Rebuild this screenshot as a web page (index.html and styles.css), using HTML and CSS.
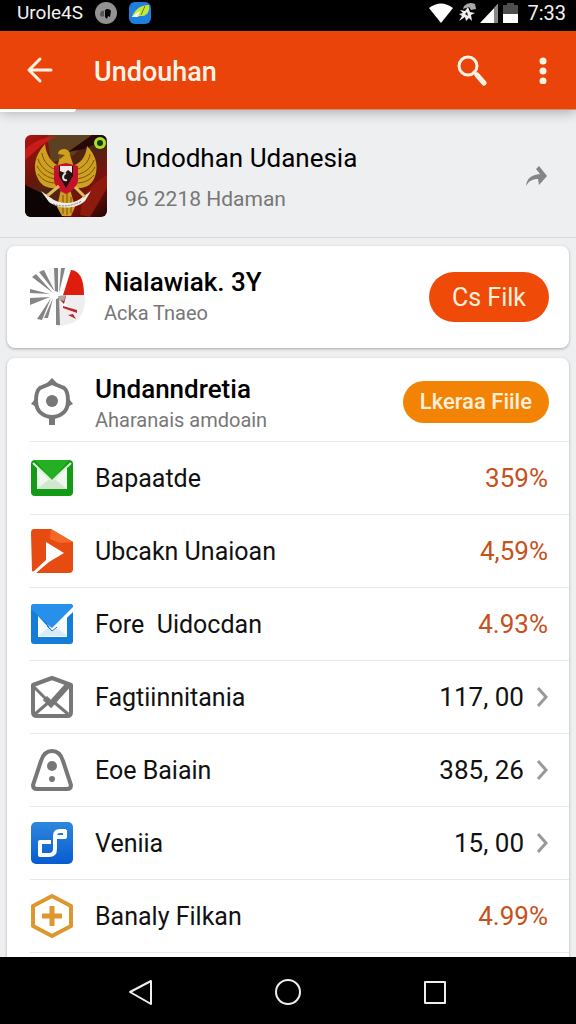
FILE: index.html
```html
<!DOCTYPE html>
<html lang="id">
<head>
    <meta charset="UTF-8">
    <meta name="viewport" content="width=device-width, initial-scale=1.0">
    <title>Undouhan</title>
    <link rel="stylesheet" href="styles.css">
</head>
<body>
    <div class="status-bar">
        <span>Urole4S</span>
        <svg width="22" height="22" viewBox="0 0 22 22">
            <circle cx="11" cy="11" r="11" fill="#929292"/>
            <path d="M5 13c0-3 2-5 4-4v5c-2 1-3 1-4-1z" fill="#555"/>
            <path d="M10 8c2-2 5-1 6 1l-1 6-2-1-1 3-2-2z" fill="#050505"/>
        </svg>
        <svg width="22" height="22" viewBox="0 0 22 22">
            <rect width="22" height="22" rx="6" fill="#1e7fe0"/>
            <path d="M3 15C6 7 12 3 20 3c1 5-1 10-6 11-4 0-7 0-11 1z" fill="#c9e636"/>
            <path d="M3 15c3-3 5-5 8-6l-2 6z" fill="#e9f6f5"/>
            <path d="M12 13l4-9" stroke="#508c2a" stroke-width="1"/>
        </svg>
        <span class="spacer"></span>
        <svg class="wifi" width="26" height="22" viewBox="0 0 26 22">
            <path d="M1 6Q13-3 25 6L13 21z" fill="#fff"/>
        </svg>
        <svg width="18" height="22" viewBox="0 0 18 22">
            <path d="M6 4Q11-1 17 2l1 5-5 1-2-3-6 2z" fill="#aaa"/>
            <path d="M2 8l5 1 3-4 2 5 5 1-4 2 1 6-3-3-3 3-1-4-6 4 3-5-3-2 4-1z" fill="#eee"/>
            <path d="M7 12l2-2 1 4z" fill="#111"/>
        </svg>
        <svg width="19" height="22" viewBox="0 0 19 22">
            <path d="M0 21L18 2v19z" fill="#fff"/>
            <path d="M14 6l4-4v19h-4z" fill="#888"/>
        </svg>
        <svg width="15" height="22" viewBox="0 0 15 22">
            <path d="M0 3h4V1h7v2h4v18H0z" fill="#4d4d4d"/>
            <path d="M0 12h15v9H0z" fill="#fff"/>
        </svg>
        <span class="clock">7:33</span>
    </div>

    <header class="app-bar">
        <button class="icon-btn" type="button" aria-label="Kembali">
            <svg width="28" height="28" viewBox="0 0 28 28" fill="none" stroke="#fff3e6" stroke-width="3" stroke-linecap="round" stroke-linejoin="round">
                <path d="M14 3L3 14l11 11M3 14h22"/>
            </svg>
        </button>
        <h1>Undouhan</h1>
        <button class="icon-btn" type="button" aria-label="Cari">
            <svg width="32" height="32" viewBox="0 0 32 32" fill="none" stroke="#fff3e6" stroke-linecap="round">
                <circle cx="12" cy="12" r="9" stroke-width="3"/>
                <path d="M18 18l3 3" stroke-width="3"/>
                <path d="M21 21l7 8" stroke-width="5"/>
            </svg>
        </button>
        <button class="icon-btn menu-btn" type="button" aria-label="Menu">
            <svg width="10" height="28" viewBox="0 0 10 28" fill="#fff3e6">
                <circle cx="5" cy="5" r="3.5"/>
                <circle cx="5" cy="15" r="3.5"/>
                <circle cx="5" cy="25" r="3.5"/>
            </svg>
        </button>
    </header>

    <main>
        <section class="profile">
            <svg class="emblem" width="82" height="82" viewBox="0 0 82 82">
                <defs>
                    <linearGradient id="cloth" x1="0" y1="0" x2="1" y2="1">
                        <stop offset="0" stop-color="#b31210"/>
                        <stop offset=".3" stop-color="#6b1509"/>
                        <stop offset=".5" stop-color="#4a2715"/>
                        <stop offset=".75" stop-color="#7d0f0a"/>
                        <stop offset="1" stop-color="#200503"/>
                    </linearGradient>
                </defs>
                <rect width="82" height="82" fill="url(#cloth)"/>
                <path d="M0 50l25 12 14 20H0z" fill="#0d0504"/>
                <path d="M22 0h45L49 20 26 28z" fill="#5b4022"/>
                <path d="M67 0L43 17l16-3L82 4V0z" fill="#260807"/>
                <path d="M0 14Q14 2 31 1L17 10 0 25z" fill="#c91c18"/>
                <path d="M55 80Q57 53 82 40v13L65 82z" fill="#8e1a0d"/>
                <g fill="#cf9f1f">
                    <path d="M20 9C10 20 7 32 13 44c4 8 12 10 20 9l2-22C27 29 21 20 20 9z"/>
                    <path d="M62 11c10 10 12 22 7 33-4 8-12 10-20 9l-2-22c8-2 14-9 15-20z"/>
                    <path d="M32 32l3-10-2-4c2-6 12-5 12 2l4 12z"/>
                    <path d="M36 54l-4 18 5 9h9l4-9-5-18z"/>
                </g>
                <g fill="none" stroke="#765510" stroke-width="1">
                    <path d="M17 18c1 8 7 15 15 17M13 24c3 9 10 14 18 16M12 31c4 8 11 12 19 13M13 39c5 7 11 9 18 9"/>
                    <path d="M65 19c-1 8-7 14-15 16M69 25c-3 9-10 13-18 15M70 32c-4 8-11 11-19 12M69 40c-5 6-11 8-18 8"/>
                    <path d="M38 60v19M42 58v22M46 62v16"/>
                </g>
                <path d="M33 19l7 1-5 4z" fill="#6e4c15"/>
                <path d="M29 31l12-3 12 3v15q-2 9-12 13-10-4-12-13z" fill="#c3132a"/>
                <path d="M34 31h14v10l-7 12-7-12z" fill="#23100f"/>
                <path d="M35 31h12v7l-4-3-3 3-5-2z" fill="#f4e6e3"/>
                <path d="M41 38c-5 3-3 8 1 7" fill="none" stroke="#ddd" stroke-width="2"/>
                <path d="M16 56l13 9c8 4 19 4 26-1l11-8-6 10c-10 9-27 8-36 1z" fill="#f0ece6"/>
                <path d="M28 69q14 5 29-3" fill="none" stroke="#777" stroke-width="1" stroke-dasharray="2 1"/>
                <path d="M22 61l12-10M60 62L50 52" stroke="#dfba5b" stroke-width="3"/>
                <circle cx="75" cy="8" r="6" fill="#a8df2c"/>
                <circle cx="75" cy="8" r="3" fill="#173c0c"/>
            </svg>
            <div class="texts">
                <h2>Undodhan Udanesia</h2>
                <p>96 2218 Hdaman</p>
            </div>
            <button class="icon-btn" type="button" aria-label="Bagikan">
                <svg width="24" height="22" viewBox="0 0 24 22">
                    <path d="M2 21C3 13 7 10 16 9l-4-5 3-3 8 10-8 9-1-6C8 14 5 16 2 21z" fill="#858585"/>
                </svg>
            </button>
        </section>

        <section class="card promo">
            <svg width="56" height="60" viewBox="0 0 56 60">
                <path d="M18 1h18l-6 26-9-6z" fill="#f7f7f7"/>
                <path d="M41 3q13 1 13 25H33z" fill="#df1d0e"/>
                <path d="M33 28h22q1 25-16 29l-12 3 1-28z" fill="#eee"/>
                <g fill="#858585">
                    <path d="M24 1h4v24l-3-1zM31 1h4l-6 25zM2 10l4-3 17 19zM9 5l5-2 11 22zM0 22l20 5-20-1zM0 31l20-1-20 8zM7 52l14-21-9 22zM14 51l9-20-5 20zM26 32l3-1 1 27h-4z"/>
                </g>
                <path d="M38 18l-8 14 3 9 14 5-15-12 1-7z" fill="#fff"/>
                <path d="M28 31l8-2-2 8zM33 39l14 4v3l-14-5zM38 48l5-1 3 5z" fill="#bd252e"/>
                <path d="M28 29l8-1-2 6-5-1z" fill="#aaa"/>
            </svg>
            <div class="texts">
                <h2>Nialawiak. 3Y</h2>
                <p>Acka Tnaeo</p>
            </div>
            <button class="pill" type="button">Cs Filk</button>
        </section>

        <section class="card files">
            <div class="card-head">
                <svg width="42" height="48" viewBox="0 0 42 48">
                    <g fill="none" stroke="#777">
                        <path d="M21 5l12 5q4 3 4 13 0 8-5 12-5 4-11 4t-11-4q-5-4-5-12 0-10 4-13z" stroke-width="4"/>
                        <path d="M21 39v8" stroke-width="6"/>
                    </g>
                    <path d="M16 5l5-5 5 5zM4 21v7l-4-2zM38 21v7l4-2z" fill="#777"/>
                    <circle cx="21" cy="23" r="6" fill="#777"/>
                </svg>
                <div class="texts">
                    <h2>Undanndretia</h2>
                    <p>Aharanais amdoain</p>
                </div>
                <button class="pill pill-amber" type="button">Lkeraa Fiile</button>
            </div>
            <ul class="list">
                <li class="row">
                    <svg width="42" height="42" viewBox="0 0 42 42">
                        <rect y="3" width="42" height="36" rx="4" fill="#149b16"/>
                        <path d="M6 10l15 14 15-14v22H6z" fill="#eef8ed"/>
                        <path d="M6 32l15-12 15 12z" fill="#d1e7d0"/>
                        <path d="M2 6l19 18L40 6" fill="none" stroke="#d9f1d5" stroke-width="2"/>
                        <path d="M4 3h34L21 23z" fill="#25af22"/>
                    </svg>
                    <span class="name">Bapaatde</span>
                    <span class="percent">359%</span>
                </li>
                <li class="row">
                    <svg width="42" height="44" viewBox="0 0 42 44">
                        <path d="M3 0h17l22 13v27q0 4-4 4H6L1 42 0 4q0-4 3-4z" fill="#e64b11"/>
                        <path d="M20 0l22 13-13 1-10-4z" fill="#f66827"/>
                        <path d="M15 13l18 11-15 9L5 44H1l14-13z" fill="#fff"/>
                    </svg>
                    <span class="name">Ubcakn Unaioan</span>
                    <span class="percent">4,59%</span>
                </li>
                <li class="row">
                    <svg width="42" height="40" viewBox="0 0 42 40">
                        <rect width="42" height="40" rx="3" fill="#147dd7"/>
                        <path d="M3 0h36q3 0 3 3L21 24 0 5q0-5 3-5z" fill="#2690ea"/>
                        <path d="M7 12l13 14 16-13v20H7z" fill="#f5faff"/>
                        <path d="M7 32l11-9 4 4 4-3 10 8z" fill="#d9eaf8"/>
                        <path d="M16 20l5 4L42 3v5L22 27z" fill="#fff"/>
                        <path d="M16 22l5 5 5-4" fill="none" stroke="#287bbc" stroke-width="1"/>
                    </svg>
                    <span class="name">Fore&nbsp; Uidocdan</span>
                    <span class="percent">4.93%</span>
                </li>
                <li>
                    <a class="row" href="#">
                        <svg width="42" height="42" viewBox="0 0 42 42" fill="none" stroke="#777">
                            <path d="M2 9l19-7 19 7v27q0 4-4 4H6q-4 0-4-4z" stroke-width="4" stroke-linejoin="round"/>
                            <path d="M3 11l16 16M4 38l14-12M24 27l13 11" stroke-width="3"/>
                            <path d="M14 22l6 6L38 8" stroke-width="6"/>
                        </svg>
                        <span class="name">Fagtiinnitania</span>
                        <span class="amount">117, 00</span>
                        <svg class="chevron" width="12" height="22" viewBox="0 0 12 22"><path d="M2 2l8 9-8 9"/></svg>
                    </a>
                </li>
                <li>
                    <a class="row" href="#">
                        <svg width="42" height="42" viewBox="0 0 42 42">
                            <path d="M10 12C12 5 16 2 21 2s9 3 11 10l8 24q0 4-4 4H6q-4 0-4-4z" fill="none" stroke="#777" stroke-width="4"/>
                            <circle cx="21" cy="17" r="5" fill="#777"/>
                            <circle cx="21" cy="30" r="3" fill="#777"/>
                        </svg>
                        <span class="name">Eoe Baiain</span>
                        <span class="amount">385, 26</span>
                        <svg class="chevron" width="12" height="22" viewBox="0 0 12 22"><path d="M2 2l8 9-8 9"/></svg>
                    </a>
                </li>
                <li>
                    <a class="row" href="#">
                        <svg width="42" height="42" viewBox="0 0 42 42">
                            <defs>
                                <linearGradient id="blue" x1="0" y1="0" x2="0" y2="1">
                                    <stop offset="0" stop-color="#2d87dd"/>
                                    <stop offset="1" stop-color="#075cd0"/>
                                </linearGradient>
                            </defs>
                            <rect width="42" height="42" rx="5" fill="url(#blue)"/>
                            <path d="M20 20H9v13h9q6 0 6-6V14q0-5 5-5h6M25 15h9V8" fill="none" stroke="#fff" stroke-width="4" stroke-linejoin="round"/>
                        </svg>
                        <span class="name">Veniia</span>
                        <span class="amount">15, 00</span>
                        <svg class="chevron" width="12" height="22" viewBox="0 0 12 22"><path d="M2 2l8 9-8 9"/></svg>
                    </a>
                </li>
                <li class="row">
                    <svg width="42" height="44" viewBox="0 0 42 44" fill="none" stroke="#dd972d" stroke-linejoin="round">
                        <path d="M21 2l19 10v20L21 42 2 32V12z" stroke-width="4"/>
                        <path d="M21 12v20M11 22h20" stroke-width="5"/>
                    </svg>
                    <span class="name">Banaly Filkan</span>
                    <span class="percent">4.99%</span>
                </li>
            </ul>
        </section>
    </main>

    <nav class="nav-bar">
        <button class="icon-btn" type="button" aria-label="Kembali">
            <svg width="28" height="28" viewBox="0 0 28 28"><path d="M24 3v23L3 14z"/></svg>
        </button>
        <button class="icon-btn" type="button" aria-label="Beranda">
            <svg width="28" height="28" viewBox="0 0 28 28"><circle cx="14" cy="14" r="12"/></svg>
        </button>
        <button class="icon-btn" type="button" aria-label="Aplikasi terbaru">
            <svg width="28" height="28" viewBox="0 0 28 28"><rect x="4" y="4" width="20" height="21"/></svg>
        </button>
    </nav>
</body>
</html>
```
FILE: styles.css
```css
* {
    box-sizing: border-box;
}
body {
    margin: 0;
    height: 100vh;
    display: flex;
    flex-direction: column;
    font-family: Roboto, sans-serif;
    background: #eeeff0;
    color: #111;
}
h1, h2, p, ul {
    margin: 0;
    padding: 0;
}
svg {
    display: block;
    flex-shrink: 0;
}
.icon-btn {
    display: flex;
    padding: 0;
    border: none;
    background: none;
    cursor: pointer;
}

/* status bar */
.status-bar {
    display: flex;
    flex-shrink: 0;
    align-items: center;
    height: 31px;
    padding: 0 10px 6px 17px;
    background: #000;
    color: #f2f2f2;
    font-size: 19px;
}
.status-bar svg {
    margin-left: 12px;
}
.status-bar .wifi ~ svg {
    margin-left: 4px;
}
.spacer {
    flex: 1;
}
.status-bar .clock {
    margin-left: 9px;
    font-size: 20px;
}

/* app bar */
.app-bar {
    position: relative;
    display: flex;
    flex-shrink: 0;
    align-items: center;
    height: 79px;
    padding: 0 28px 0 26px;
    background: #eb440a;
    border-bottom: 1px solid #d98d70;
    box-shadow: 0 2px 12px rgba(0, 0, 0, 0.3);
    color: #fff3e6;
    z-index: 1;
}
/* tab indicator */
.app-bar::after {
    content: "";
    position: absolute;
    left: 0;
    bottom: -3px;
    width: 76px;
    height: 3px;
    border-radius: 0 0 3px 0;
    background: #fff;
}
.app-bar h1 {
    flex: 1;
    margin-left: 40px;
    padding-top: 4px;
    font-size: 27px;
    font-weight: 500;
}
.menu-btn {
    margin-left: 50px;
}

main {
    display: flex;
    flex-direction: column;
    flex: 1;
    min-height: 0;
    overflow: hidden;
}
.texts {
    flex: 1;
}
.texts h2 {
    font-size: 26px;
    line-height: 32px;
    font-weight: 500;
    color: #000;
}
.texts p {
    font-size: 20px;
    line-height: 30px;
    color: #777;
}

.profile {
    display: flex;
    flex-shrink: 0;
    align-items: center;
    gap: 18px;
    height: 128px;
    padding: 4px 28px 0 25px;
    border-bottom: 1px solid #d9dadc;
}
.profile h2 {
    margin: 4px 0 10px;
    font-weight: 400;
}
.profile p {
    font-size: 21px;
}
.emblem {
    border-radius: 6px;
}

.card {
    flex-shrink: 0;
    margin: 8px 7px 0;
    background: #fff;
    border-radius: 8px;
    box-shadow: 0 1px 3px rgba(0, 0, 0, 0.3);
}
.promo {
    display: flex;
    align-items: center;
    gap: 18px;
    height: 102px;
    padding: 0 20px 0 23px;
}
.files {
    margin-top: 10px;
    padding-bottom: 24px;
}
.card-head {
    display: flex;
    align-items: center;
    gap: 22px;
    height: 83px;
    padding: 4px 20px 0 24px;
}
.card-head .texts {
    padding-top: 4px;
}
.pill {
    height: 50px;
    padding: 0 23px;
    border: none;
    border-radius: 25px;
    background: #f04a09;
    color: #fff0dc;
    font-family: inherit;
    font-size: 25px;
    cursor: pointer;
}
.pill-amber {
    height: 42px;
    padding: 0 17px;
    background: #f28304;
    font-size: 22px;
    font-weight: 500;
}

/* file list */
.list {
    margin-left: 23px;
    border-bottom: 1px solid #e8e8ea;
    list-style: none;
}
.row {
    display: flex;
    align-items: center;
    height: 73px;
    padding: 0 21px 0 1px;
    border-top: 1px solid #e8e8ea;
    color: #111;
    font-size: 25px;
    text-decoration: none;
}
.name {
    flex: 1;
    margin-left: 22px;
}
.percent {
    color: #c8501a;
    font-size: 26px;
}
.amount {
    font-size: 26px;
}
.chevron {
    margin-left: 12px;
    fill: none;
    stroke: #999;
    stroke-width: 3;
}

/* system navigation */
.nav-bar {
    display: flex;
    flex-shrink: 0;
    align-items: center;
    justify-content: center;
    gap: 119px;
    height: 67px;
    padding-top: 3px;
    background: #000;
}
.nav-bar svg {
    fill: none;
    stroke: #eee;
    stroke-width: 2;
    stroke-linejoin: round;
}
```
